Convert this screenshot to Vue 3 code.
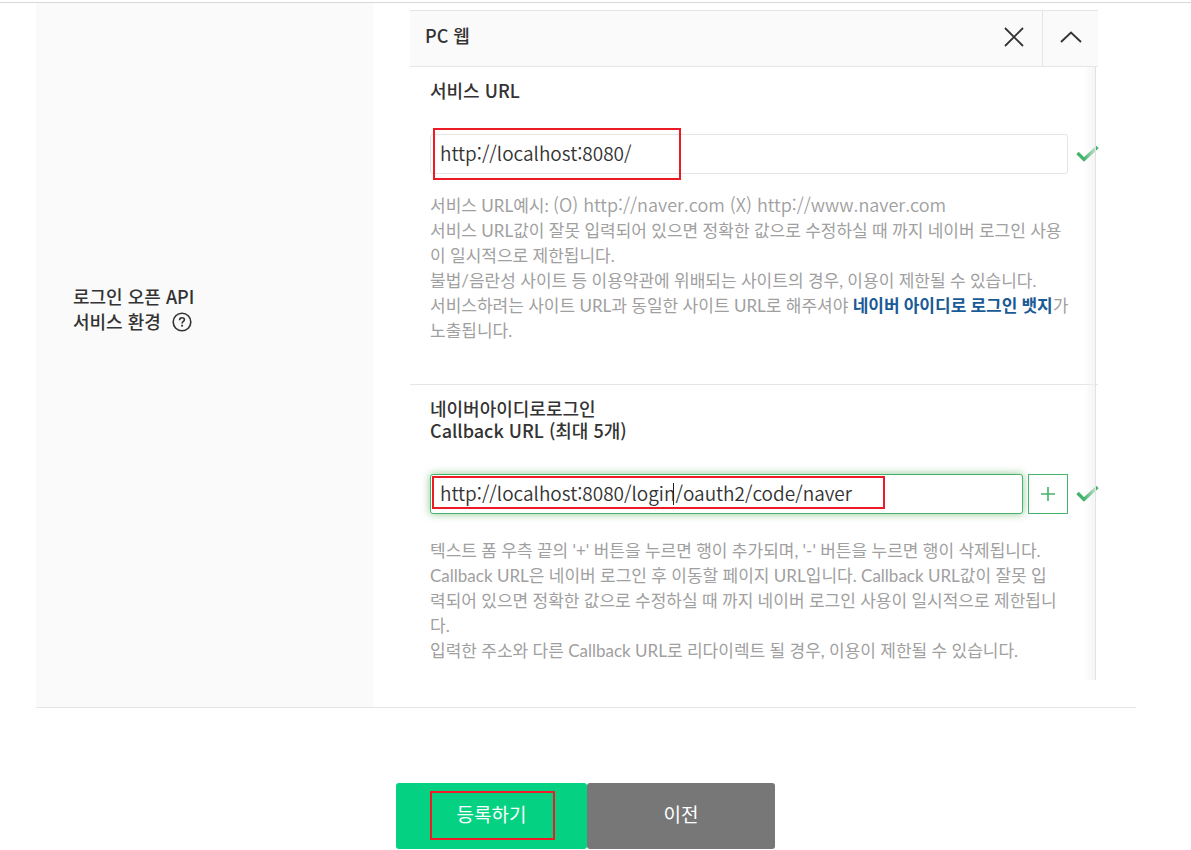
<script setup>
import { ref } from 'vue'

const serviceUrl = ref('http://localhost:8080/')
const callbackUrl = ref('http://localhost:8080/login/oauth2/code/naver')
</script>

<template>
  <main class="page" lang="ko">
    <section class="row">
      <div class="row-label">
        <h2>
          로그인 오픈 API<br />서비스 환경
          <button type="button" class="help" aria-label="도움말">
            <svg width="20" height="20" viewBox="0 0 20 20" fill="none" stroke="#333" stroke-width="1.6">
              <circle cx="10" cy="10" r="8.8" />
              <path d="M7.6 8.2c0-1.6 1-2.5 2.4-2.5s2.4.8 2.4 2c0 1.7-2.3 1.8-2.3 3.7" />
              <path d="M10.1 12.8v1.8" stroke-width="1.9" />
            </svg>
          </button>
        </h2>
      </div>

      <div class="row-body">
        <div class="panel">
          <header class="panel-head">
            <h3>PC 웹</h3>
            <button type="button" class="head-btn remove" aria-label="삭제">
              <svg width="20" height="20" viewBox="0 0 20 20" fill="none" stroke="#333" stroke-width="1.8">
                <path d="M1 1l18 18M19 1L1 19" />
              </svg>
            </button>
            <button type="button" class="head-btn fold" aria-label="접기">
              <svg width="22" height="12" viewBox="0 0 22 12" fill="none" stroke="#333" stroke-width="1.9">
                <path d="M1 11L11 1.6L21 11" />
              </svg>
            </button>
          </header>

          <div class="panel-content">
            <div class="group service">
              <label class="title" for="service-url">서비스 URL</label>
              <div class="field">
                <input id="service-url" v-model="serviceUrl" type="text" />
                <svg class="check" width="23" height="16" viewBox="0 0 23 16" fill="none" stroke="#44b36b" stroke-width="3.4">
                  <path d="M1.5 7L8 13.5L21.5 1" />
                </svg>
                <span class="mark mark-service"></span>
              </div>
              <p class="help-text">
                서비스 URL예시: <span class="sample">(O) http://naver.com (X) http://www.naver.com</span><br />
                서비스 URL값이 잘못 입력되어 있으면 정확한 값으로 수정하실 때 까지 네이버 로그인 사용<br />이 일시적으로 제한됩니다.<br />
                불법/음란성 사이트 등 이용약관에 위배되는 사이트의 경우, 이용이 제한될 수 있습니다.<br />
                서비스하려는 사이트 URL과 동일한 사이트 URL로 해주셔야
                <a href="#">네이버 아이디로 로그인 뱃지</a>가<br />노출됩니다.
              </p>
            </div>

            <div class="group callback">
              <label class="title" for="callback-url">네이버아이디로로그인<br />Callback URL (최대 5개)</label>
              <div class="field">
                <input id="callback-url" v-model="callbackUrl" class="active" type="text" />
                <button type="button" class="add" aria-label="추가">
                  <svg width="16" height="16" viewBox="0 0 16 16" fill="none" stroke="#44b36b" stroke-width="1.6">
                    <path d="M8 1v14M1 8h14" />
                  </svg>
                </button>
                <svg class="check" width="23" height="16" viewBox="0 0 23 16" fill="none" stroke="#44b36b" stroke-width="3.4">
                  <path d="M1.5 7L8 13.5L21.5 1" />
                </svg>
                <span class="caret"></span>
                <span class="mark mark-callback"></span>
              </div>
              <p class="help-text">
                텍스트 폼 우측 끝의 '+' 버튼을 누르면 행이 추가되며, '-' 버튼을 누르면 행이 삭제됩니다.<br />
                Callback URL은 네이버 로그인 후 이동할 페이지 URL입니다. Callback URL값이 잘못 입<br />력되어 있으면 정확한 값으로 수정하실 때 까지 네이버 로그인 사용이 일시적으로 제한됩니<br />다.<br />
                입력한 주소와 다른 Callback URL로 리다이렉트 될 경우, 이용이 제한될 수 있습니다.
              </p>
            </div>
            <div class="edge"></div>
          </div>
        </div>
      </div>
    </section>

    <div class="actions">
      <button type="submit" class="action submit">등록하기<span class="mark mark-submit"></span></button>
      <button type="button" class="action back">이전</button>
    </div>
  </main>
</template>

<style>
body {
  margin: 0;
  background: #fff;
}
</style>

<style scoped>
* {
  box-sizing: border-box;
}
.page {
  margin-top: 2px;
  border-top: 1px solid #d8d8d8;
  font-family: "Noto Sans CJK KR", sans-serif;
  color: #333;
}
button {
  padding: 0;
  border: 0;
  background: none;
  font-family: inherit;
  cursor: pointer;
}
svg {
  display: block;
}
.row {
  display: grid;
  grid-template-columns: 337px 1fr;
  margin: 0 55px 0 36px;
  border-bottom: 1px solid #e5e5e5;
}
.row-label {
  display: flex;
  align-items: center;
  padding: 0 37px 92px;
  background: #fafafa;
}
h2 {
  margin: 0;
  font-size: 18px;
  line-height: 25px;
  font-weight: 500;
}
.help {
  display: inline-block;
  margin-left: 6px;
  vertical-align: -3px;
}
.row-body {
  padding: 7px 38px 27px 37px;
}
.panel-head {
  display: flex;
  height: 57px;
  background: #fafafa;
  border-top: 1px solid #e5e5e5;
  border-bottom: 1px solid #e5e5e5;
}
h3 {
  flex: 1;
  margin: 0;
  padding-left: 15px;
  font-size: 18px;
  line-height: 48px;
  font-weight: 500;
}
.head-btn {
  display: flex;
  align-items: center;
  justify-content: center;
  width: 56px;
  padding-bottom: 4px;
}
.fold {
  border-left: 1px solid #e5e5e5;
}
.panel-content {
  position: relative;
}
.group {
  padding: 0 30px 0 20px;
}
.service {
  padding-top: 12px;
  padding-bottom: 41px;
  border-bottom: 1px solid #e5e5e5;
}
.callback {
  padding-top: 12px;
  padding-bottom: 17px;
}
.title {
  display: block;
  font-size: 18px;
  line-height: 22px;
  font-weight: 500;
}
.field {
  position: relative;
  display: flex;
  gap: 5px;
  margin-top: 33px;
}
input {
  flex: 1;
  min-width: 0;
  height: 40px;
  padding: 0 9px 4px;
  border: 1px solid #e5e5e5;
  border-radius: 3px;
  background: #fff;
  font-family: "Noto Sans CJK KR", sans-serif;
  font-size: 19px;
  font-weight: 350;
  color: #333;
  outline: none;
}
input.active {
  border-color: #44b36b;
  box-shadow: 0 0 8px rgba(68, 160, 68, 0.6);
}
.add {
  display: flex;
  align-items: center;
  justify-content: center;
  width: 40px;
  border: 1px solid #44b36b;
}
.check {
  position: absolute;
  left: 100%;
  top: 12px;
  margin-left: 8px;
}
.mark {
  position: absolute;
  border: 2px solid #ed1c24;
  pointer-events: none;
}
.mark-service {
  left: 3px;
  top: -6px;
  width: 248px;
  height: 52px;
}
.mark-callback {
  left: 2px;
  top: 2px;
  width: 453px;
  height: 33px;
}
.caret {
  position: absolute;
  left: 243px;
  top: 9px;
  width: 1px;
  height: 22px;
  background: #222;
}
.help-text {
  margin: 18px -8px 0 0;
  font-family: Lato, "Noto Sans CJK KR", sans-serif;
  font-size: 17px;
  line-height: 25px;
  font-weight: 400;
  color: #a0a0a0;
}
.callback .help-text {
  margin-top: 24px;
}
.sample {
  font-family: "Noto Sans CJK KR", sans-serif;
  font-size: 18px;
  font-weight: 350;
  line-height: 24px;
}
.help-text a {
  color: #1a5a96;
  font-weight: 700;
  text-decoration: none;
}
.edge {
  position: absolute;
  top: 0;
  right: 2px;
  bottom: 0;
  width: 12px;
  border-right: 1px solid #e2e2e2;
  background: linear-gradient(to right, rgba(255, 255, 255, 0), rgba(240, 240, 240, 0.7));
  pointer-events: none;
}
.actions {
  display: flex;
  justify-content: center;
  margin: 75px 20px 0 0;
}
.action {
  position: relative;
  height: 66px;
  border-radius: 3px;
  padding-bottom: 6px;
  font-size: 19px;
  font-weight: 400;
  color: #fff;
}
.submit {
  width: 191px;
  background: #04d282;
}
.back {
  width: 188px;
  background: #777;
}
.mark-submit {
  left: 34px;
  top: 8px;
  width: 125px;
  height: 49px;
}
</style>
